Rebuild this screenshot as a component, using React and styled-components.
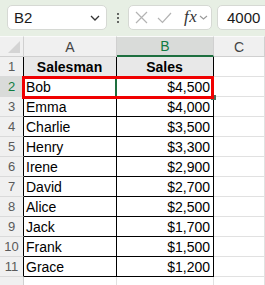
import React from "react";
import styled, { createGlobalStyle } from "styled-components";

const Global = createGlobalStyle`
  html, body { margin: 0; padding: 0; background: #fff; overflow: hidden; }
  * { box-sizing: border-box; }
`;

const Page = styled.div`
  width: 265px;
  height: 285px;
  overflow: hidden;
  font-family: "Liberation Sans", Arial, sans-serif;
  display: flex;
  flex-direction: column;
`;

const Toolbar = styled.div`
  height: 36px;
  flex: none;
  background: #e7efe4;
  display: flex;
  align-items: flex-start;
  padding: 5px 0 0 7px;
  overflow: hidden;
`;

const Box = styled.div`
  height: 25px;
  background: #fff;
  border: 1px solid #d6d9d4;
  border-radius: 5px;
  display: flex;
  align-items: center;
  flex: none;
`;

const NameBox = styled(Box)`
  width: 100px;
  padding: 0 6px 0 6px;
  justify-content: space-between;
  font-size: 15px;
  color: #1a1a1a;
`;

const Dots = styled.div`
  display: flex;
  flex-direction: column;
  gap: 2px;
  margin: 8px 9px 0 10px;
  span {
    width: 2px;
    height: 2px;
    background: #3a3a3a;
    border-radius: 1px;
  }
`;

const FormulaButtons = styled(Box)`
  width: 84px;
  padding: 0 0 0 6px;
  gap: 0;
`;

const Fx = styled.span`
  font-family: "Liberation Serif", "Times New Roman", serif;
  font-style: italic;
  font-size: 17px;
  color: #333;
  margin: -2px 2px 0 12px;
  letter-spacing: 0.5px;
`;

const ValueBox = styled(Box)`
  width: 80px;
  margin-left: 5px;
  padding-left: 9px;
  font-size: 15px;
  color: #1a1a1a;
  border-radius: 5px 0 0 5px;
`;

const SheetWrap = styled.div`
  position: relative;
  flex: 1;
`;

const Sheet = styled.div`
  display: grid;
  grid-template-columns: 24px 93px 97px 1fr;
  grid-template-rows: 21px repeat(12, 20px);
  font-size: 14px;
`;

const Corner = styled.div`
  background: #f0f0f0;
  border-top: 1px solid #fafafa;
  border-right: 1px solid #d0d0d0;
  border-bottom: 1px solid #d0d0d0;
  position: relative;
  &::after {
    content: "";
    position: absolute;
    right: 3px;
    bottom: 3px;
    width: 0;
    height: 0;
    border-left: 12px solid transparent;
    border-bottom: 12px solid #d4d4d4;
  }
`;

const ColHeader = styled.div`
  background: ${(p) => (p.$selected ? "#d9dbd9" : "#f0f0f0")};
  color: ${(p) => (p.$selected ? "#107c41" : "#444")};
  border-top: 1px solid #fafafa;
  border-right: 1px solid #d0d0d0;
  border-bottom: ${(p) => (p.$selected ? "2px solid #1e6f3f" : "1px solid #d0d0d0")};
  display: flex;
  align-items: center;
  justify-content: center;
  font-size: 14px;
`;

const RowHeader = styled.div`
  background: ${(p) => (p.$selected ? "#d9dbd9" : "#f0f0f0")};
  color: ${(p) => (p.$selected ? "#107c41" : "#5a5a5a")};
  border-right: 1px solid ${(p) => (p.$inTable ? "#000" : "#d0d0d0")};
  border-bottom: 1px solid #dadada;
  display: flex;
  align-items: center;
  justify-content: center;
  font-size: 13px;
`;

const Cell = styled.div`
  position: relative;
  background: ${(p) => (p.$head ? "#e8e8e8" : "#fff")};
  border-right: 1px solid ${(p) => (p.$inTable ? "#000" : "#e1e1e1")};
  border-bottom: 1px solid ${(p) => (p.$inTable ? "#000" : "#e1e1e1")};
  display: flex;
  align-items: center;
  justify-content: ${(p) => (p.$head ? "center" : p.$num ? "flex-end" : "flex-start")};
  padding: 0 3px 0 2px;
  font-weight: ${(p) => (p.$head ? 700 : 400)};
  color: #000;
  white-space: nowrap;
  ${(p) =>
    p.$active &&
    `
    &::before {
      content: "";
      position: absolute;
      left: -2px;
      top: -1px;
      bottom: -1px;
      width: 2px;
      background: #1e6f3f;
    }
  `}
`;

const FillHandle = styled.span`
  position: absolute;
  right: -3px;
  bottom: -4px;
  width: 5px;
  height: 5px;
  background: #4f6b57;
  z-index: 1;
`;

const Highlight = styled.div`
  position: absolute;
  left: 22px;
  top: 40px;
  width: 192px;
  height: 23px;
  border: 3px solid #f00000;
  pointer-events: none;
  z-index: 2;
`;

const data = [
  ["Bob", "$4,500"],
  ["Emma", "$4,000"],
  ["Charlie", "$3,500"],
  ["Henry", "$3,300"],
  ["Irene", "$2,900"],
  ["David", "$2,700"],
  ["Alice", "$2,500"],
  ["Jack", "$1,700"],
  ["Frank", "$1,500"],
  ["Grace", "$1,200"],
];

const Chevron = ({ w = 10, h = 6, color = "#333", sw = 1.3 }) => (
  <svg width={w} height={h} viewBox={`0 0 ${w} ${h}`}>
    <polyline points={`1,1 ${w / 2},${h - 1} ${w - 1},1`} fill="none" stroke={color} strokeWidth={sw} />
  </svg>
);

const XIcon = () => (
  <svg width="13" height="13" viewBox="0 0 13 13">
    <path d="M1 1 L12 12 M12 1 L1 12" stroke="#b3b3b3" strokeWidth="1.2" fill="none" />
  </svg>
);

const CheckIcon = () => (
  <svg width="15" height="12" viewBox="0 0 15 12" style={{ marginLeft: 9 }}>
    <path d="M1 6 L5.5 10.5 L14 1" stroke="#b3b3b3" strokeWidth="1.2" fill="none" />
  </svg>
);

export default function App() {
  return (
    <>
      <Global />
      <Page>
        <Toolbar>
          <NameBox>
            <span>B2</span>
            <Chevron w={10} h={6} />
          </NameBox>
          <Dots>
            <span />
            <span />
            <span />
          </Dots>
          <FormulaButtons>
            <XIcon />
            <CheckIcon />
            <Fx>fx</Fx>
            <Chevron w={9} h={5} color="#9a9a9a" sw={1.1} />
          </FormulaButtons>
          <ValueBox>4000</ValueBox>
        </Toolbar>
        <SheetWrap>
          <Sheet>
            <Corner />
            <ColHeader>A</ColHeader>
            <ColHeader $selected>B</ColHeader>
            <ColHeader>C</ColHeader>

            <RowHeader $inTable>1</RowHeader>
            <Cell $inTable $head>Salesman</Cell>
            <Cell $inTable $head>Sales</Cell>
            <Cell />

            {data.map(([name, sales], i) => {
              const row = i + 2;
              const active = row === 2;
              return (
                <React.Fragment key={name}>
                  <RowHeader $inTable $selected={active}>{row}</RowHeader>
                  <Cell $inTable>{name}</Cell>
                  <Cell $inTable $num $active={active}>
                    {sales}
                    {active && <FillHandle />}
                  </Cell>
                  <Cell />
                </React.Fragment>
              );
            })}

            <RowHeader />
            <Cell />
            <Cell />
            <Cell />
          </Sheet>
          <Highlight />
        </SheetWrap>
      </Page>
    </>
  );
}
